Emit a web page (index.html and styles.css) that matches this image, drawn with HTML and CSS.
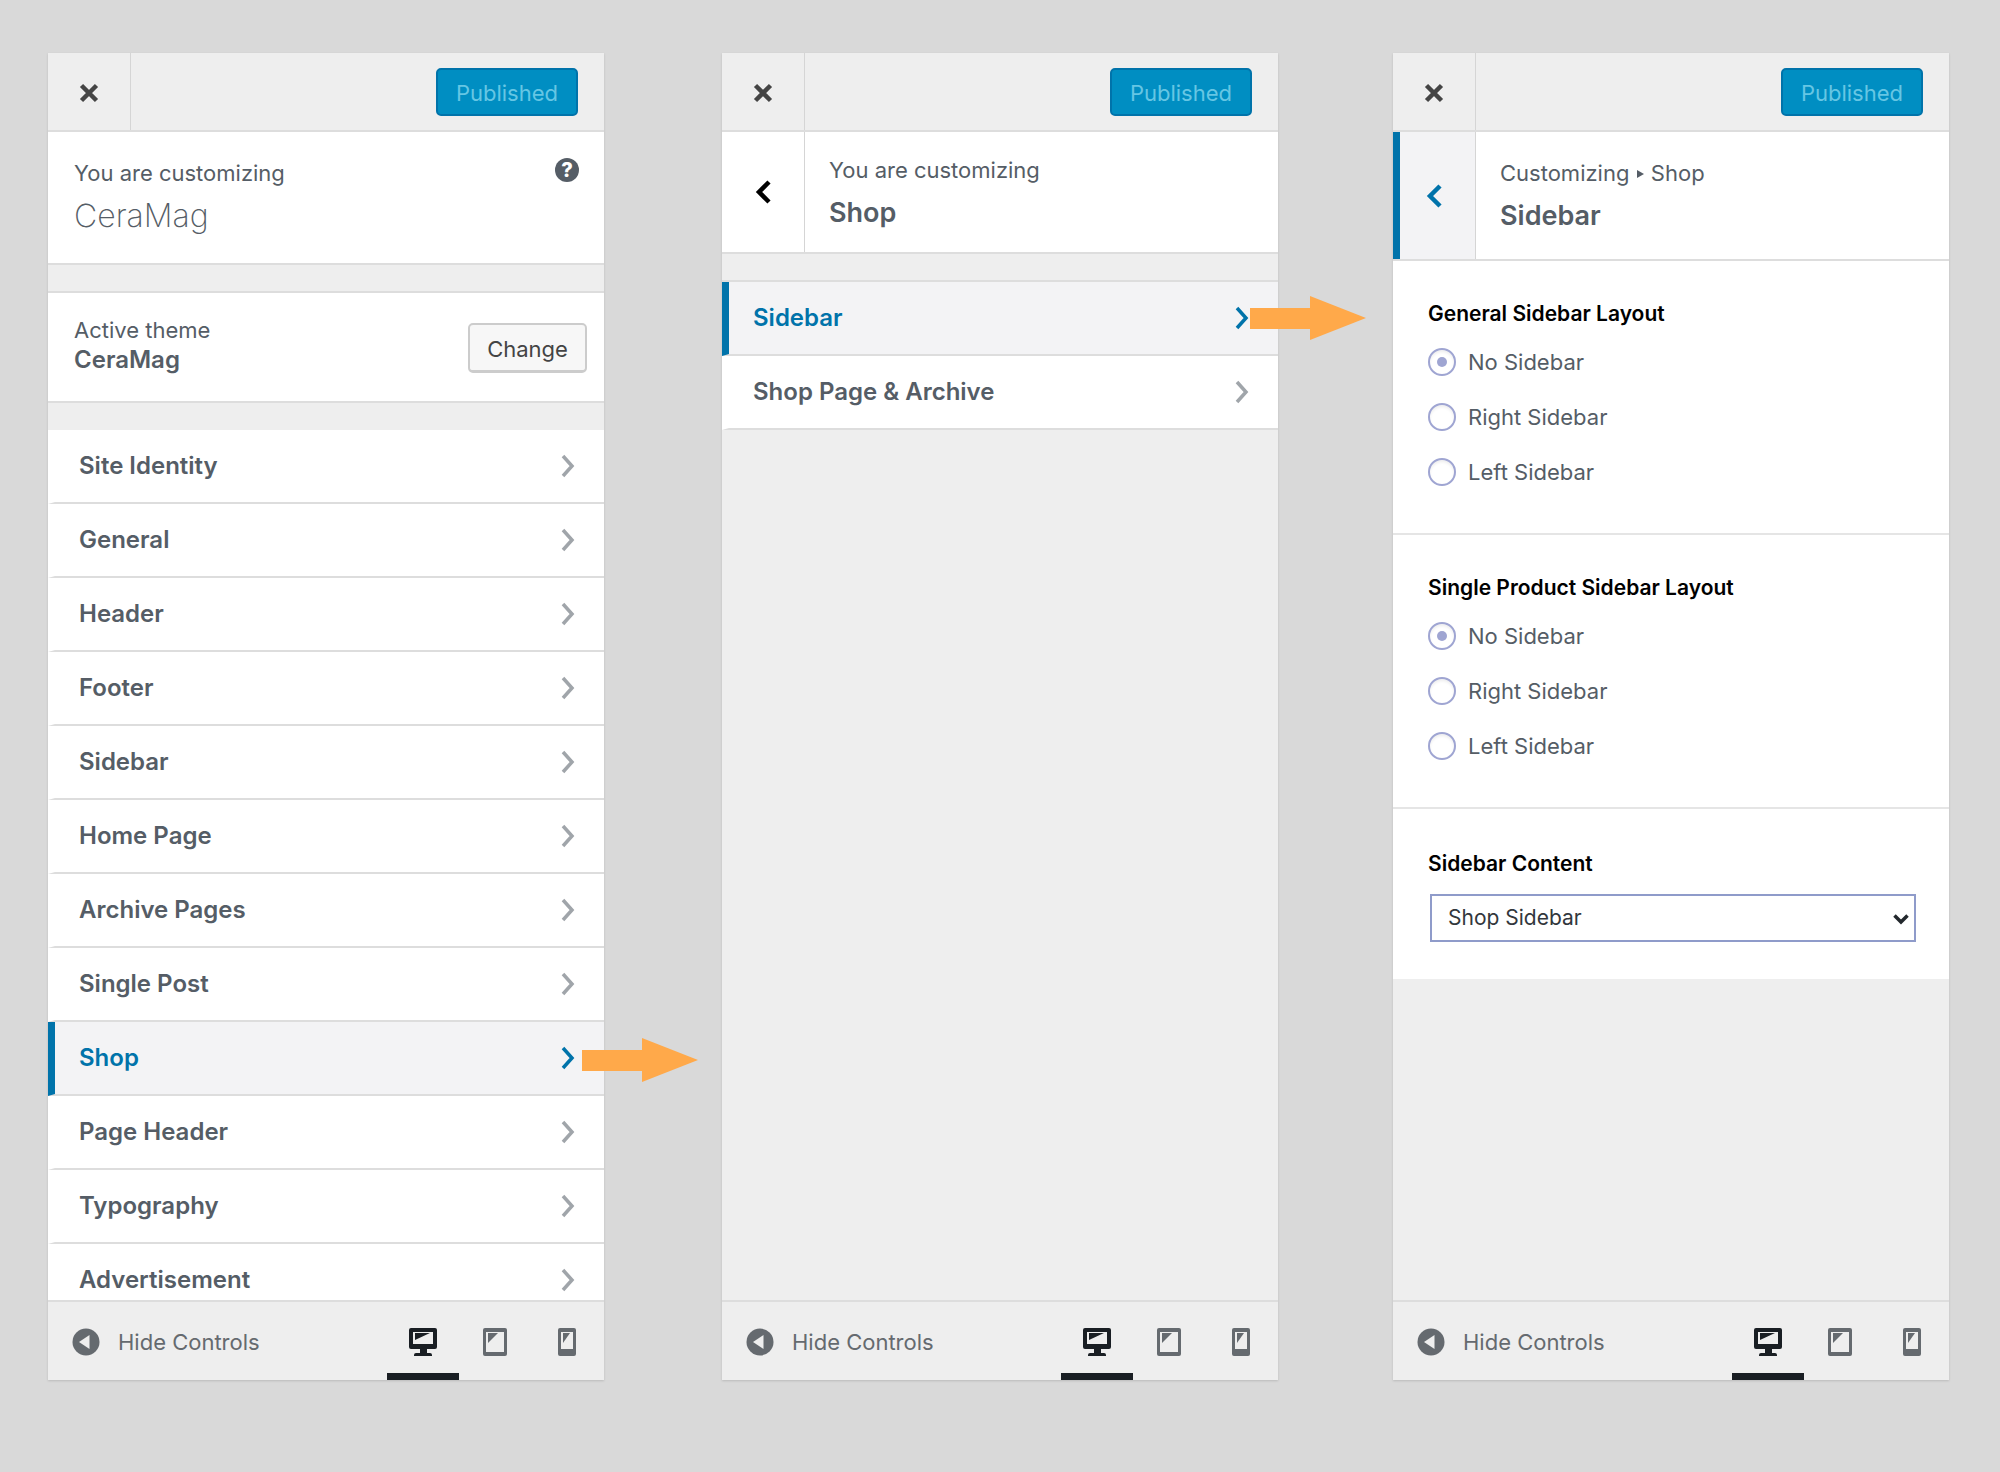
FILE: index.html
```html
<!DOCTYPE html>
<html lang="en">
<head>
    <meta charset="UTF-8">
    <meta name="viewport" content="width=device-width, initial-scale=1.0">
    <title>Customizer - Shop Sidebar</title>
    <link rel="stylesheet" href="styles.css">
</head>
<body>
    <!-- shared icons -->
    <svg class="icon-defs" aria-hidden="true">
        <symbol id="icon-close" viewBox="0 0 20 20">
            <path d="M2.500 2.500l15 15M17.500 2.500l-15 15" fill="none" stroke="currentColor" stroke-width="4.500"/>
        </symbol>
        <symbol id="icon-next" viewBox="0 0 14 24">
            <path d="M2 2l9 10-9 10" fill="none" stroke="currentColor" stroke-width="3.500"/>
        </symbol>
        <symbol id="icon-back" viewBox="0 0 16 24">
            <path d="M14 2L4 12l10 10" fill="none" stroke="currentColor" stroke-width="4.500"/>
        </symbol>
        <symbol id="icon-collapse" viewBox="0 0 28 28">
            <circle cx="14" cy="14" r="13.500" fill="currentColor"/>
            <path d="M17.500 7v14L7 14z" fill="#eee"/>
        </symbol>
        <symbol id="icon-desktop" viewBox="0 0 28 28">
            <path fill="currentColor" fill-rule="evenodd" d="M2 0h24a2 2 0 0 1 2 2v17a2 2 0 0 1-2 2h-8v4h3a2 2 0 0 1 2 2v1H5v-1a2 2 0 0 1 2-2h4v-4H2a2 2 0 0 1-2-2V2a2 2 0 0 1 2-2zM4 4v12h20V4z"/>
            <path fill="currentColor" d="M6 5h15L6 12z"/>
        </symbol>
        <symbol id="icon-tablet" viewBox="0 0 28 28">
            <path fill="currentColor" fill-rule="evenodd" d="M4 0h20a2 2 0 0 1 2 2v24a2 2 0 0 1-2 2H4a2 2 0 0 1-2-2V2a2 2 0 0 1 2-2zM5 4v20h18V4z"/>
            <path fill="currentColor" d="M7 5h10L7 15z"/>
        </symbol>
        <symbol id="icon-phone" viewBox="0 0 28 28">
            <path fill="currentColor" fill-rule="evenodd" d="M7 0h14a2 2 0 0 1 2 2v24a2 2 0 0 1-2 2H7a2 2 0 0 1-2-2V2a2 2 0 0 1 2-2zM8 4v17h12V4z"/>
            <path fill="currentColor" d="M10 5h7l-7 10z"/>
        </symbol>
        <symbol id="icon-arrow" viewBox="0 0 116 44">
            <path d="M0 12h60V0l56 22-56 22V33H0z" fill="#ffa94a"/>
        </symbol>
    </svg>

    <main class="screens">
        <!-- root panel -->
        <section class="panel">
            <header class="panel-header">
                <button class="close" type="button" aria-label="Close"><svg class="icon-close"><use href="#icon-close"/></svg></button>
                <button class="publish" type="button">Published</button>
            </header>
            <div class="intro">
                <div>
                    <p class="intro-label">You are customizing</p>
                    <h1 class="site-name">CeraMag</h1>
                </div>
                <button class="help" type="button" aria-label="Help">?</button>
            </div>
            <div class="theme">
                <div class="theme-text">
                    <p class="theme-label">Active theme</p>
                    <h2 class="theme-name">CeraMag</h2>
                </div>
                <button class="change" type="button">Change</button>
            </div>
            <ul class="menu">
                <li><a class="menu-item" href="#">Site Identity<svg class="icon-next"><use href="#icon-next"/></svg></a></li>
                <li><a class="menu-item" href="#">General<svg class="icon-next"><use href="#icon-next"/></svg></a></li>
                <li><a class="menu-item" href="#">Header<svg class="icon-next"><use href="#icon-next"/></svg></a></li>
                <li><a class="menu-item" href="#">Footer<svg class="icon-next"><use href="#icon-next"/></svg></a></li>
                <li><a class="menu-item" href="#">Sidebar<svg class="icon-next"><use href="#icon-next"/></svg></a></li>
                <li><a class="menu-item" href="#">Home Page<svg class="icon-next"><use href="#icon-next"/></svg></a></li>
                <li><a class="menu-item" href="#">Archive Pages<svg class="icon-next"><use href="#icon-next"/></svg></a></li>
                <li><a class="menu-item" href="#">Single Post<svg class="icon-next"><use href="#icon-next"/></svg></a></li>
                <li><a class="menu-item active" href="#">Shop<svg class="icon-next"><use href="#icon-next"/></svg></a></li>
                <li><a class="menu-item" href="#">Page Header<svg class="icon-next"><use href="#icon-next"/></svg></a></li>
                <li><a class="menu-item" href="#">Typography<svg class="icon-next"><use href="#icon-next"/></svg></a></li>
                <li><a class="menu-item" href="#">Advertisement<svg class="icon-next"><use href="#icon-next"/></svg></a></li>
            </ul>
            <footer class="panel-footer">
                <button class="collapse" type="button"><svg class="icon-device"><use href="#icon-collapse"/></svg>Hide Controls</button>
                <div class="devices">
                    <button class="device active" type="button" aria-label="Desktop"><svg class="icon-device"><use href="#icon-desktop"/></svg></button>
                    <button class="device" type="button" aria-label="Tablet"><svg class="icon-device"><use href="#icon-tablet"/></svg></button>
                    <button class="device" type="button" aria-label="Mobile"><svg class="icon-device"><use href="#icon-phone"/></svg></button>
                </div>
            </footer>
        </section>

        <div class="connector"><svg class="arrow arrow-shop"><use href="#icon-arrow"/></svg></div>

        <!-- shop panel -->
        <section class="panel">
            <header class="panel-header">
                <button class="close" type="button" aria-label="Close"><svg class="icon-close"><use href="#icon-close"/></svg></button>
                <button class="publish" type="button">Published</button>
            </header>
            <div class="section-title">
                <button class="back" type="button" aria-label="Back"><svg class="icon-back"><use href="#icon-back"/></svg></button>
                <div class="section-text">
                    <p class="intro-label">You are customizing</p>
                    <h2 class="section-name">Shop</h2>
                </div>
            </div>
            <ul class="menu menu-shop">
                <li><a class="menu-item active" href="#">Sidebar<svg class="icon-next"><use href="#icon-next"/></svg></a></li>
                <li><a class="menu-item" href="#">Shop Page &amp; Archive<svg class="icon-next"><use href="#icon-next"/></svg></a></li>
            </ul>
            <footer class="panel-footer">
                <button class="collapse" type="button"><svg class="icon-device"><use href="#icon-collapse"/></svg>Hide Controls</button>
                <div class="devices">
                    <button class="device active" type="button" aria-label="Desktop"><svg class="icon-device"><use href="#icon-desktop"/></svg></button>
                    <button class="device" type="button" aria-label="Tablet"><svg class="icon-device"><use href="#icon-tablet"/></svg></button>
                    <button class="device" type="button" aria-label="Mobile"><svg class="icon-device"><use href="#icon-phone"/></svg></button>
                </div>
            </footer>
        </section>

        <div class="connector"><svg class="arrow arrow-sidebar"><use href="#icon-arrow"/></svg></div>

        <!-- sidebar settings -->
        <section class="panel">
            <header class="panel-header">
                <button class="close" type="button" aria-label="Close"><svg class="icon-close"><use href="#icon-close"/></svg></button>
                <button class="publish" type="button">Published</button>
            </header>
            <div class="section-title section-title-deep">
                <button class="back active" type="button" aria-label="Back"><svg class="icon-back"><use href="#icon-back"/></svg></button>
                <div class="section-text">
                    <p class="intro-label">Customizing <span class="crumb"></span> Shop</p>
                    <h2 class="section-name">Sidebar</h2>
                </div>
            </div>
            <form class="settings">
                <fieldset class="control">
                    <legend class="control-title">General Sidebar Layout</legend>
                    <label class="choice"><input class="radio" type="radio" name="general" checked>No Sidebar</label>
                    <label class="choice"><input class="radio" type="radio" name="general">Right Sidebar</label>
                    <label class="choice"><input class="radio" type="radio" name="general">Left Sidebar</label>
                </fieldset>
                <fieldset class="control">
                    <legend class="control-title">Single Product Sidebar Layout</legend>
                    <label class="choice"><input class="radio" type="radio" name="product" checked>No Sidebar</label>
                    <label class="choice"><input class="radio" type="radio" name="product">Right Sidebar</label>
                    <label class="choice"><input class="radio" type="radio" name="product">Left Sidebar</label>
                </fieldset>
                <div class="control control-last">
                    <label class="control-title" for="sidebar-content">Sidebar Content</label>
                    <div class="select-wrap">
                        <select class="select" id="sidebar-content">
                            <option>Shop Sidebar</option>
                        </select>
                        <svg class="select-arrow" viewBox="0 0 16 12"><path d="M1.500 2.500L8 9l6.500-6.500" fill="none" stroke="#23282d" stroke-width="3.500"/></svg>
                    </div>
                </div>
            </form>
            <footer class="panel-footer">
                <button class="collapse" type="button"><svg class="icon-device"><use href="#icon-collapse"/></svg>Hide Controls</button>
                <div class="devices">
                    <button class="device active" type="button" aria-label="Desktop"><svg class="icon-device"><use href="#icon-desktop"/></svg></button>
                    <button class="device" type="button" aria-label="Tablet"><svg class="icon-device"><use href="#icon-tablet"/></svg></button>
                    <button class="device" type="button" aria-label="Mobile"><svg class="icon-device"><use href="#icon-phone"/></svg></button>
                </div>
            </footer>
        </section>
    </main>
</body>
</html>
```
FILE: styles.css
```css
* {
    box-sizing: border-box;
}
body {
    margin: 0;
    background-color: #d9d9d9;
    color: #555d66;
    font-family: Inter, "Liberation Sans", sans-serif;
    font-size: 22px;
    line-height: 30px;
}
h1, h2, p, ul {
    margin: 0;
    padding: 0;
}
button, select {
    font: inherit;
    color: inherit;
    margin: 0;
    padding: 0;
    border: none;
    background: none;
    cursor: pointer;
}
svg {
    display: block;
    flex: none;
}
.icon-defs {
    display: none;
}
.screens {
    display: grid;
    grid-template-columns: 1fr 118px 1fr 115px 1fr;
    height: 100vh;
    padding: 53px 51px 92px 48px;
}
.panel {
    display: flex;
    flex-direction: column;
    min-width: 0;
    min-height: 0;
    background-color: #eee;
    box-shadow: 0 1px 2px #bbb;
}

/* arrows between the screens */
.connector {
    position: relative;
}
.arrow {
    position: absolute;
    width: 116px;
    height: 44px;
}
.arrow-shop {
    left: -22px;
    top: 985px;
}
.arrow-sidebar {
    left: -28px;
    top: 243px;
}

/* top bar */
.panel-header {
    display: flex;
    flex: none;
    align-items: center;
    justify-content: space-between;
    height: 79px;
    padding-right: 26px;
    border-bottom: 2px solid #ddd;
}
.close {
    display: flex;
    align-items: center;
    justify-content: center;
    width: 83px;
    height: 100%;
    padding-top: 2px;
    border-right: 1px solid #d5d5d5;
    color: #444;
}
.icon-close {
    width: 20px;
    height: 20px;
}
.publish {
    width: 142px;
    height: 48px;
    padding-top: 2px;
    border: 2px solid #0073aa;
    border-radius: 5px;
    background-color: #008ec2;
    color: #66c6e4;
}

/* root panel intro */
.intro {
    display: flex;
    flex: none;
    justify-content: space-between;
    align-items: flex-start;
    height: 133px;
    padding: 26px;
    padding-right: 25px;
    border-bottom: 2px solid #ddd;
    background-color: #fff;
}
.site-name {
    padding-top: 8px;
    font-size: 32px;
    line-height: 40px;
    font-weight: 200;
}
.help {
    width: 24px;
    height: 24px;
    border-radius: 50%;
    background-color: #555d66;
    color: #fff;
    font-size: 20px;
    line-height: 24px;
    font-weight: 800;
}
.theme {
    display: flex;
    flex: none;
    justify-content: space-between;
    align-items: center;
    height: 112px;
    margin: 26px 0 27px;
    padding: 2px 17px 0 26px;
    border: solid #ddd;
    border-width: 2px 0;
    background-color: #fff;
}
.theme-text {
    padding-bottom: 6px;
}
.theme-name {
    font-size: 24px;
    line-height: 30px;
    font-weight: 600;
}
.change {
    width: 119px;
    height: 50px;
    padding-top: 2px;
    border: 2px solid #ccc;
    border-bottom-width: 3px;
    border-radius: 5px;
    background-color: #f7f7f7;
    color: #444;
}

/* menu lists */
.menu {
    flex: 1;
    min-height: 0;
    overflow: hidden;
    list-style: none;
}
.menu-shop {
    margin-top: 26px;
    border-top: 2px solid #ddd;
}
.menu-item {
    display: flex;
    align-items: center;
    justify-content: space-between;
    height: 74px;
    padding: 0 29px 0 24px;
    border-left: 7px solid #fff;
    border-bottom: 2px solid #ddd;
    background-color: #fff;
    color: #555d66;
    font-size: 24px;
    font-weight: 600;
    text-decoration: none;
}
.menu-item .icon-next {
    color: #a0a5aa;
}
.menu-item.active {
    border-left-color: #0073aa;
    background-color: #f3f3f5;
    color: #0073aa;
}
.menu-item.active .icon-next {
    color: #0073aa;
}
.icon-next {
    width: 14px;
    height: 24px;
}

/* section title with back button */
.section-title {
    display: flex;
    flex: none;
    height: 122px;
    border-bottom: 2px solid #ddd;
    background-color: #fff;
}
.section-title-deep {
    height: 129px;
}
.back {
    display: flex;
    align-items: center;
    justify-content: center;
    width: 83px;
    border-right: 1px solid #d5d5d5;
    color: #000;
}
.back.active {
    padding-right: 7px;
    border-left: 7px solid #0073aa;
    background-color: #f3f3f5;
    color: #0073aa;
}
.icon-back {
    width: 16px;
    height: 24px;
}
.section-text {
    display: flex;
    flex-direction: column;
    justify-content: center;
    gap: 11px;
    padding: 0 24px;
}
.section-name {
    font-size: 27px;
    line-height: 34px;
    font-weight: 600;
}
.crumb {
    display: inline-block;
    margin: 0 1px 3px;
    border: solid transparent;
    border-width: 4px 0 4px 7px;
    border-left-color: #555d66;
}

/* settings */
.settings {
    flex: 1;
    min-height: 0;
}
.control {
    display: flex;
    flex-direction: column;
    min-width: 0;
    height: 274px;
    margin: 0;
    padding: 38px 33px 0 35px;
    border: none;
    border-bottom: 2px solid #e5e5e5;
    background-color: #fff;
}
.control-last {
    height: 170px;
    padding-top: 40px;
    border-bottom: none;
}
.control-title {
    float: left;
    width: 100%;
    margin-bottom: 5px;
    padding: 0;
    color: #000;
    font-size: 21px;
    line-height: 30px;
    font-weight: 600;
}
.choice {
    display: flex;
    align-items: center;
    gap: 12px;
    height: 55px;
}
.radio {
    display: flex;
    align-items: center;
    justify-content: center;
    appearance: none;
    width: 28px;
    height: 28px;
    margin: 0;
    border: 2px solid #9fa5d2;
    border-radius: 50%;
    background-color: #fff;
    box-shadow: inset 0 2px 3px #eee;
}
.radio:checked::before {
    content: "";
    width: 10px;
    height: 10px;
    border-radius: 50%;
    background-color: #9fa5d2;
}
.select-wrap {
    position: relative;
    margin-top: 10px;
    padding-left: 2px;
}
.select {
    appearance: none;
    width: 100%;
    height: 48px;
    padding: 0 16px;
    border: 2px solid #8f9bca;
    background-color: #fff;
    color: #32373c;
    font-size: 21px;
}
.select-arrow {
    position: absolute;
    right: 7px;
    top: 19px;
    width: 16px;
    height: 12px;
    pointer-events: none;
}

/* bottom bar */
.panel-footer {
    display: flex;
    flex: none;
    justify-content: space-between;
    height: 80px;
    padding-right: 1px;
    border-top: 2px solid #ddd;
}
.collapse {
    display: flex;
    align-items: center;
    gap: 18px;
    padding: 2px 0 0 24px;
    color: #656a6f;
}
.icon-device {
    width: 28px;
    height: 28px;
}
.devices {
    display: flex;
}
.device {
    display: flex;
    align-items: center;
    justify-content: center;
    width: 72px;
    padding-top: 9px;
    border-bottom: 7px solid transparent;
    color: #656a6f;
}
.device.active {
    border-bottom-color: #191e23;
    color: #191e23;
}
```
